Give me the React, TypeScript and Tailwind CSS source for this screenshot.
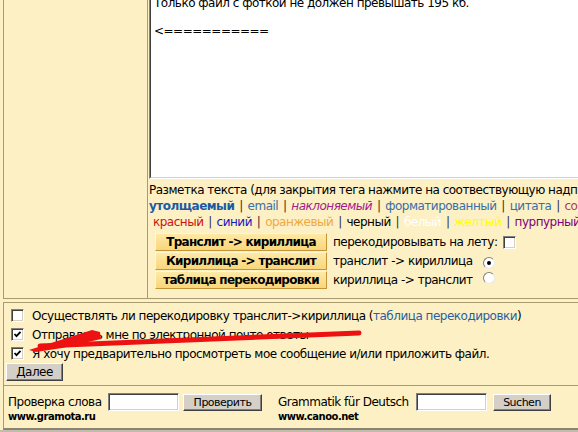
import React from "react";

const font = "font-['DejaVu_Sans',Tahoma,sans-serif] tracking-[-0.5px]";

function Check({ checked }: { checked?: boolean }) {
  return (
    <span className="inline-flex h-[13px] w-[13px] shrink-0 items-center justify-center border border-t-[#808080] border-l-[#808080] border-b-white border-r-white bg-white shadow-[inset_1px_1px_0_#404040,inset_-1px_-1px_0_#d4d0c8]">
      {checked && (
        <svg width="9" height="9" viewBox="0 0 9 9">
          <path d="M1.5 4 L3.5 6.2 L7.5 1.8" stroke="#000" strokeWidth="1.8" fill="none" />
        </svg>
      )}
    </span>
  );
}

function Radio({ checked }: { checked?: boolean }) {
  return (
    <span className="inline-flex h-[12px] w-[12px] shrink-0 items-center justify-center rounded-full border border-t-[#808080] border-l-[#808080] border-b-[#e8e8e8] border-r-[#e8e8e8] bg-white">
      {checked && <span className="h-[4px] w-[4px] rounded-full bg-black" />}
    </span>
  );
}

function GoldButton({ children }: { children: React.ReactNode }) {
  return (
    <button className="flex h-[18px] w-[172px] shrink-0 items-center justify-center whitespace-nowrap border border-t-[#fff6d0] border-l-[#fff6d0] border-b-[#c39535] border-r-[#c39535] bg-gradient-to-b from-[#fee9a6] to-[#f9d67a] text-[12px] font-bold leading-none tracking-[-0.7px] text-black">
      {children}
    </button>
  );
}

function GrayButton({ children, w }: { children: React.ReactNode; w: string }) {
  return (
    <button
      className={
        "flex h-[17px] items-center justify-center whitespace-nowrap border border-t-white border-l-white border-b-[#404040] border-r-[#404040] bg-[#d4d0c8] text-[11px] leading-none text-black shadow-[inset_-1px_-1px_0_#808080] " +
        w
      }
    >
      {children}
    </button>
  );
}

function TextBox() {
  return (
    <span className="inline-block h-[18px] w-[71px] shrink-0 border border-t-[#808080] border-l-[#808080] border-b-white border-r-white bg-white shadow-[inset_1px_1px_0_#404040,inset_-1px_-1px_0_#d4d0c8]" />
  );
}

const Sep = () => <span className="text-[#333]"> | </span>;

export default function App() {
  return (
    <div className={"relative h-[432px] w-[578px] overflow-hidden bg-[#fdf0c4] text-black " + font}>
      {/* top table */}
      <div className="ml-[3px] flex h-[299px] border-b border-l border-[#a89b72]">
        <div className="w-[144px] shrink-0 border-r border-[#a89b72]" />
        <div className="flex min-w-0 flex-1 flex-col pl-[1px]">
          <div className="h-[179px] border-b border-l border-b-white border-l-[#808080]">
            <div className="h-full overflow-hidden whitespace-pre border-b border-l border-b-[#d4d0c8] border-l-[#404040] bg-white pl-[3px] text-[12px] leading-[14px]">
              <div className="-mt-[4px]">
                {"Только файл с фоткой не должен превышать 195 кб.\n\n<==========="}
              </div>
            </div>
          </div>
          <div className="mt-[3px] whitespace-nowrap text-[12px] leading-[16px]">
            Разметка текста (для закрытия тега нажмите на соотвествующую надпись)
          </div>
          <div className="whitespace-nowrap text-[12px] leading-[16px] [word-spacing:1.5px]">
            <span className="font-bold text-[#1b5aa3]">утолщаемый</span>
            <Sep />
            <span className="text-[#3a6ea5]">email</span>
            <Sep />
            <span className="italic text-[#a0208c]">наклоняемый</span>
            <Sep />
            <span className="text-[#3a6ea5]">форматированный</span>
            <Sep />
            <span className="text-[#3a6ea5]">цитата</span>
            <Sep />
            <span className="text-[#b03a5a]">сообщение</span>
          </div>
          <div className="whitespace-nowrap pl-[4px] text-[12px] leading-[16px] [word-spacing:1.5px]">
            <span className="text-[#d01010]">красный</span>
            <Sep />
            <span className="text-[#1818c0]">синий</span>
            <Sep />
            <span className="text-[#f0a840]">оранжевый</span>
            <Sep />
            <span>черный</span>
            <Sep />
            <span className="text-white">белый</span>
            <Sep />
            <span className="text-[#ffff00]">желтый</span>
            <Sep />
            <span className="text-[#800080]">пурпурный</span>
          </div>
          <div className="mt-[3px] flex flex-col gap-[1px] pl-[6px] text-[12px]">
            <div className="flex h-[18px] items-center gap-[6px]">
              <GoldButton>Транслит -&gt; кириллица</GoldButton>
              <span className="whitespace-nowrap">перекодировывать на лету:</span>
              <Check />
            </div>
            <div className="flex h-[18px] items-center gap-[6px]">
              <GoldButton>Кириллица -&gt; транслит</GoldButton>
              <span className="whitespace-nowrap">транслит -&gt; кириллица</span>
              <span className="ml-[4px]">
                <Radio checked />
              </span>
            </div>
            <div className="flex h-[18px] items-center gap-[6px]">
              <GoldButton>таблица перекодировки</GoldButton>
              <span className="whitespace-nowrap">кириллица -&gt; транслит</span>
              <span className="ml-[4px]">
                <Radio />
              </span>
            </div>
          </div>
        </div>
      </div>

      {/* options */}
      <div className="ml-[3px] mt-[3px] border-l border-t border-[#a89b72] pb-[4px] pt-[3px] text-[12px]">
        <div className="flex h-[19px] items-center gap-[8px] whitespace-nowrap pl-[7px]">
          <Check />
          <span>
            Осуществлять ли перекодировку транслит-&gt;кириллица (
            <span className="text-[#2a5fa0]">таблица перекодировки</span>)
          </span>
        </div>
        <div className="flex h-[19px] items-center gap-[8px] whitespace-nowrap pl-[7px]">
          <Check checked />
          <span>Отправлять мне по электронной почте ответы</span>
        </div>
        <div className="flex h-[19px] items-center gap-[8px] whitespace-nowrap pl-[7px]">
          <Check checked />
          <span>Я хочу предварительно просмотреть мое сообщение и/или приложить файл.</span>
        </div>
        <div className="pl-[2px]">
          <GrayButton w="w-[57px] h-[18px] text-[12px]">Далее</GrayButton>
        </div>
      </div>

      {/* dictionaries */}
      <div className="ml-[3px] h-[45px] border-b-2 border-l border-t border-[#a89b72] border-b-[#8a8474] pl-[4px] pt-[7px] text-[12px]">
        <div className="flex">
          <div className="w-[270px] shrink-0">
            <div className="flex items-center">
              <span className="w-[100px] shrink-0 whitespace-nowrap">Проверка слова</span>
              <TextBox />
              <span className="ml-[4px]">
                <GrayButton w="w-[79px]">Проверить</GrayButton>
              </span>
            </div>
            <div className="text-[10px] font-bold leading-[12px]">www.gramota.ru</div>
          </div>
          <div>
            <div className="flex items-center">
              <span className="w-[138px] shrink-0 whitespace-nowrap">Grammatik für Deutsch</span>
              <TextBox />
              <span className="ml-[6px]">
                <GrayButton w="w-[58px]">Suchen</GrayButton>
              </span>
            </div>
            <div className="text-[10px] font-bold leading-[12px]">www.canoo.net</div>
          </div>
        </div>
      </div>
      <div className="h-[10px] bg-[#c4bcaa]" />

      {/* red arrow */}
      <svg className="pointer-events-none absolute left-0 top-0" width="578" height="432" viewBox="0 0 578 432">
        <path d="M359 333 Q 200 339 40 346" stroke="#ee1111" strokeWidth="5" strokeLinecap="round" fill="none" />
        <polygon points="29,350 92,330 100,332 101,339 62,348 36,352" fill="#ee1111" />
      </svg>
    </div>
  );
}
